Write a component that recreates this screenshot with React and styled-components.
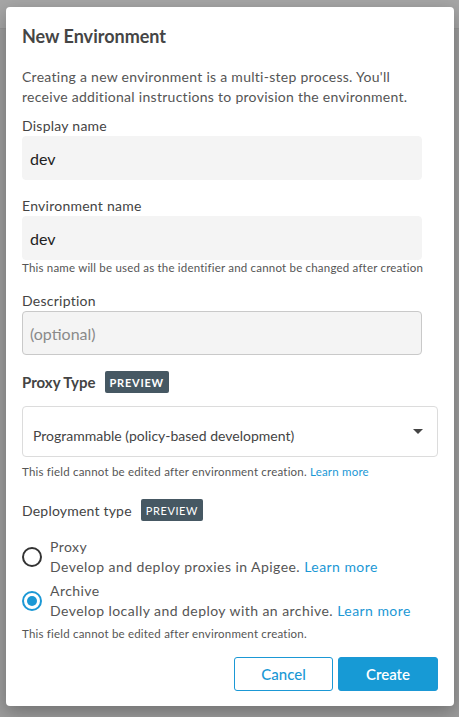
import React, { useState } from "react";
import styled, { createGlobalStyle } from "styled-components";

// GLOBAL
const GlobalStyle = createGlobalStyle`
  html, body {
    margin: 0;
    padding: 0;
  }
  body {
    font-family: Lato, "Open Sans", "Liberation Sans", sans-serif;
    background: linear-gradient(#a6a6a6 0 28px, #969696 28px 29px, #9c9c9c 29px);
    min-height: 717px;
  }
  * {
    box-sizing: border-box;
  }
`;

// STYLED COMPONENTS
const Page = styled.div`
  width: 459px;
  height: 717px;
  padding: 7px 5px 0 6px;
`;

const Dialog = styled.div`
  width: 448px;
  height: 699px;
  background: #fff;
  border-radius: 4px;
  box-shadow: 0 6px 18px rgba(0, 0, 0, 0.28);
  padding: 17px 16px 15px 16px;
  display: flex;
  flex-direction: column;
`;

const Title = styled.h2`
  margin: 0;
  font-size: 18px;
  line-height: 24px;
  font-weight: 700;
  color: #454545;
`;

const Intro = styled.p`
  margin: 19px 0 0;
  font-size: 14px;
  line-height: 20px;
  color: #555;
  letter-spacing: 0.28px;
`;

const Label = styled.label`
  display: block;
  margin-top: ${(p) => p.$top || 0}px;
  font-size: 14px;
  line-height: 20px;
  color: #444;
  letter-spacing: 0.25px;
`;

const TextInput = styled.div`
  width: 400px;
  height: 44px;
  background: #f4f4f4;
  border-radius: 4px;
  border: 1px solid ${(p) => (p.$bordered ? "#c9c9c9" : "#f4f4f4")};
  display: flex;
  align-items: center;
  padding: 0 7px;
  font-size: 16px;
  color: ${(p) => (p.$placeholder ? "#8a8a8a" : "#222")};
`;

const Helper = styled.div`
  margin-top: ${(p) => p.$top || 1}px;
  font-size: 11.5px;
  line-height: 14px;
  color: #555;
  letter-spacing: 0.2px;
`;

const Link = styled.a`
  color: #1b98d5;
  text-decoration: none;
  cursor: pointer;
`;

const SectionRow = styled.div`
  display: flex;
  align-items: center;
  gap: 9px;
  margin-top: ${(p) => p.$top || 0}px;
  height: 22px;
`;

const SectionTitle = styled.span`
  font-size: ${(p) => (p.$bold ? 15 : 14)}px;
  font-weight: ${(p) => (p.$bold ? 700 : 400)};
  color: #444;
  letter-spacing: ${(p) => (p.$bold ? 0 : 0.2)}px;
`;

const Badge = styled.span`
  display: inline-flex;
  align-items: center;
  height: 22px;
  padding: 0 5px;
  border-radius: 2px;
  background: #465863;
  color: #fff;
  font-size: 11px;
  font-weight: ${(p) => (p.$bold ? 700 : 400)};
  letter-spacing: ${(p) => (p.$bold ? 0.75 : 0.6)}px;
`;

const Select = styled.div`
  margin-top: 13px;
  width: 416px;
  height: 51px;
  border: 1px solid #dcdcdc;
  border-radius: 4px;
  display: flex;
  align-items: flex-end;
  justify-content: space-between;
  padding: 0 14px 12px 10px;
  font-size: 14px;
  color: #444;
  cursor: pointer;
`;

const Caret = styled.span`
  width: 0;
  height: 0;
  border-left: 5px solid transparent;
  border-right: 5px solid transparent;
  border-top: 5px solid #444;
  margin-bottom: 10px;
`;

const RadioGroup = styled.div`
  margin-top: 16px;
  display: flex;
  flex-direction: column;
  gap: 4px;
`;

const RadioRow = styled.div`
  display: flex;
  align-items: center;
  gap: 8px;
  cursor: pointer;
`;

const RadioCircle = styled.span`
  width: 20px;
  height: 20px;
  border-radius: 50%;
  border: 2px solid ${(p) => (p.$checked ? "#1b98d5" : "#333")};
  display: flex;
  align-items: center;
  justify-content: center;
  flex-shrink: 0;
  &::after {
    content: "";
    width: 10px;
    height: 10px;
    border-radius: 50%;
    background: ${(p) => (p.$checked ? "#1b98d5" : "transparent")};
  }
`;

const RadioText = styled.div`
  font-size: 14px;
  line-height: 20px;
  color: #555;
  letter-spacing: 0.45px;
`;

const Actions = styled.div`
  margin-top: 16px;
  display: flex;
  justify-content: flex-end;
  gap: 5px;
`;

const Button = styled.button`
  width: ${(p) => p.$w}px;
  height: 34px;
  border-radius: 3px;
  border: 1px solid #1b98d5;
  background: ${(p) => (p.$primary ? "#179ad5" : "#fff")};
  color: ${(p) => (p.$primary ? "#fff" : "#1b98d5")};
  font-family: Lato, "Liberation Sans", sans-serif;
  font-size: 15px;
  font-weight: ${(p) => (p.$primary ? 600 : 500)};
  cursor: pointer;
`;

// MAIN COMPONENT
export default function App() {
  const [deploy, setDeploy] = useState("archive");

  const options = [
    {
      id: "proxy",
      name: "Proxy",
      text: "Develop and deploy proxies in Apigee.",
    },
    {
      id: "archive",
      name: "Archive",
      text: "Develop locally and deploy with an archive.",
    },
  ];

  return (
    <>
      <GlobalStyle />
      <Page>
        <Dialog>
          <Title>New Environment</Title>
          <Intro>
            Creating a new environment is a multi-step process. You'll receive
            additional instructions to provision the environment.
          </Intro>

          <Label $top={9}>Display name</Label>
          <TextInput>dev</TextInput>

          <Label $top={16}>Environment name</Label>
          <TextInput>dev</TextInput>
          <Helper>
            This name will be used as the identifier and cannot be changed after
            creation
          </Helper>

          <Label $top={16}>Description</Label>
          <TextInput $bordered $placeholder>
            (optional)
          </TextInput>

          <SectionRow $top={16}>
            <SectionTitle $bold>Proxy Type</SectionTitle>
            <Badge $bold>PREVIEW</Badge>
          </SectionRow>
          <Select>
            <span>Programmable (policy-based development)</span>
            <Caret />
          </Select>
          <Helper $top={8}>
            This field cannot be edited after environment creation.{" "}
            <Link>Learn more</Link>
          </Helper>

          <SectionRow $top={20}>
            <SectionTitle>Deployment type</SectionTitle>
            <Badge>PREVIEW</Badge>
          </SectionRow>
          <RadioGroup>
            {options.map((o) => (
              <RadioRow key={o.id} onClick={() => setDeploy(o.id)}>
                <RadioCircle $checked={deploy === o.id} />
                <RadioText>
                  {o.name}
                  <br />
                  {o.text} <Link>Learn more</Link>
                </RadioText>
              </RadioRow>
            ))}
          </RadioGroup>
          <Helper $top={6}>
            This field cannot be edited after environment creation.
          </Helper>

          <Actions>
            <Button $w={99}>Cancel</Button>
            <Button $w={100} $primary>
              Create
            </Button>
          </Actions>
        </Dialog>
      </Page>
    </>
  );
}
